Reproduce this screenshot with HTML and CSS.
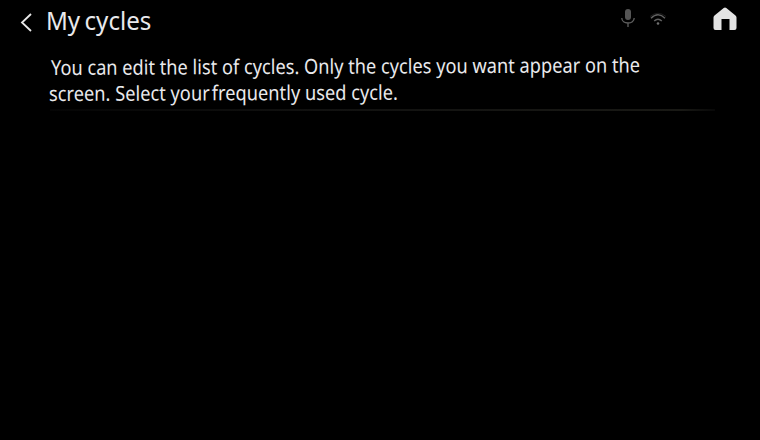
FILE: index.html
```
<!DOCTYPE html>
<html lang="en">
<head>
<meta charset="utf-8">
<title>My cycles</title>
<link rel="stylesheet" href="styles.css">
</head>
<body>
<header class="bar">
  <svg class="back" viewBox="0 0 14 20"><path d="M11 2 2 10.500l9 8.500"/></svg>
  <h1 class="title">My cycles</h1>
  <div class="status">
    <svg class="mic" viewBox="0 0 16 20"><rect x="5" y="1" width="6" height="11" rx="3"/><path d="M1.8 10c0 3.2 2.8 5 6.2 5s6.2-1.800 6.200-5M8 15v4"/></svg>
    <svg class="wifi" viewBox="0 0 18 14"><path class="faint" d="M1 4.500Q9-2 17 4.500"/><path d="M2 6.200Q9-.8 16 6.200M5.200 9Q9 5.300 12.800 9"/><circle cx="9" cy="11.500" r="1.300"/></svg>
    <svg class="home" viewBox="0 0 24 24"><path d="M10.700 1Q12 0 13.300 1L22.500 8.500Q23.500 9.300 23.500 10.500V21Q23.500 23 21.500 23H16.500V12H8.500V23H2.500Q.5 23 .5 21V10.500Q.5 9.300 1.500 8.500Z"/></svg>
  </div>
</header>
<main class="content">
  <p class="line first">You can edit the list of cycles. Only the cycles you want appear on the</p>
  <p class="line second">screen. Select <span class="tight">your </span>frequently used cycle.</p>
  <hr class="rule">
</main>
</body>
</html>
```
FILE: styles.css
```
* { box-sizing: border-box; }
body {
  margin: 0;
  height: 440px;
  overflow: hidden;
  background: #000;
  color: #e9e9ec;
  font-family: "Noto Sans", sans-serif;
}
.bar {
  display: flex;
  height: 44px;
  padding-left: 20px;
}
.back { width: 14px; height: 20px; margin-top: 12px; fill: none; stroke: #e8e8e8; stroke-width: 1.8; }
.title {
  margin: 3px 0 0 12px;
  width: 200px;
  font-size: 25.5px;
  line-height: 34px;
  font-weight: 400;
  white-space: nowrap;
  word-spacing: -2px;
  transform: scaleX(.945);
  transform-origin: 0 0;
}
.status { display: flex; margin-left: auto; padding-right: 23px; }
.mic { width: 16px; height: 20px; margin: 8px 13px 0 0; fill: #555; }
.mic path { fill: none; stroke: #606060; stroke-width: 1.3; }
.wifi { width: 18px; height: 14px; margin: 12px 46px 0 0; fill: none; stroke: #606060; stroke-width: 1.4; }
.wifi .faint { stroke: #1c1c1c; stroke-width: 1; }
.wifi circle { fill: #707070; stroke: none; }
.home { width: 24px; height: 24px; margin-top: 7px; fill: #e4e4e4; }
.content { padding: 10px 45px 0 51px; }
.line {
  margin: 0;
  width: fit-content;
  font-size: 20.5px;
  line-height: 26px;
  white-space: nowrap;
  transform-origin: 0 21px;
}
.first { transform: rotate(-.26deg) scaleX(.888); }
.second { margin-left: -2px; transform: rotate(-.22deg) scaleX(.89); }
.tight { word-spacing: -3px; }
.rule {
  height: 2px;
  margin: 3px 0 0 -1px;
  border: 0;
  background: linear-gradient(90deg, #050505, #111110 40%, #191915 95%, #080808);
}
```
